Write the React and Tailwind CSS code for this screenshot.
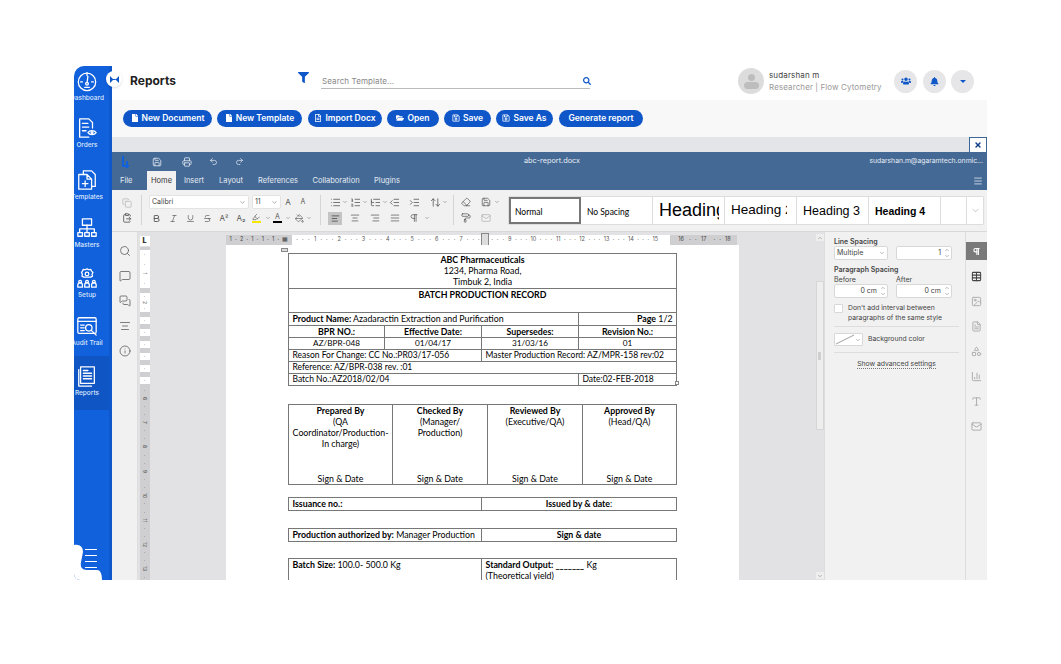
import React from "react";
import { ChevronDown, ChevronUp, Info, MessageSquare, MessagesSquare, AlignCenter, Undo2, Redo2, Printer, Save, X, Menu, Bold, Italic, Underline, Strikethrough, List, ListOrdered, ListTree, IndentIncrease, IndentDecrease, AlignLeft, AlignRight, AlignJustify, Pilcrow, Eraser, PaintRoller, Mail, Copy, ClipboardPaste, Table, Image, FileText, Shapes, BarChart3, Type, Highlighter, PaintBucket, ArrowUpDown, Search } from "lucide-react";
import { FaFilter, FaSearch, FaUsers, FaBell, FaFile, FaFolderOpen, FaRegFileAlt, FaRegSave } from "react-icons/fa";

function Side({ label, active, icon, h }) {
  return (
    <div className={`flex flex-col items-center w-[50px] -ml-[12px] shrink-0 ${h} ${active ? "bg-[#0f55c4] pt-[9px]" : ""}`}>
      {icon}
      <span className="text-[6.5px] leading-[9px] text-[#dbe7fb] whitespace-nowrap font-medium mt-[2px]">{label}</span>
    </div>
  );
}

const S = ({ children }) => (
  <svg className="shrink-0" width={22} height={22} viewBox="0 0 24 24" fill="none" stroke="#fff" strokeWidth="1.4" strokeLinejoin="round" strokeLinecap="round">{children}</svg>
);

const TopBtn = ({ w, children, icon, cls = "" }) => (
  <button className={`${w} ${cls} h-[17px] rounded-full bg-[#0f57c9] text-white text-[8.5px] font-semibold flex items-center justify-center gap-[3px] whitespace-nowrap`}>
    {icon}{children}
  </button>
);

const Tb = ({ I, c = "#4a4a4a", s = 11, w = "w-[14px]", sw = 1.6 }) => (
  <span className={`${w} shrink-0 flex items-center justify-center`}><I size={s} color={c} strokeWidth={sw} /></span>
);
const Ch = ({ w = "w-[6px]" }) => (
  <span className={`${w} shrink-0 flex items-center justify-center`}><ChevronDown size={6} color="#777" /></span>
);

const Style = ({ cls, children, active, clip = "w-[66px]" }) => (
  <div className={`w-[72px] h-full shrink-0 flex items-center bg-white border-r border-[#ddd] pl-[6px] ${active ? "outline-2 -outline-offset-2 outline-[#777]" : ""} text-black`}>
    <span className={`${clip} block overflow-hidden whitespace-nowrap ${cls}`}>{children}</span>
  </div>
);

const Td = ({ children, cls = "", ...r }) => (
  <td {...r} className={`border border-[#777] px-[3.5px] py-0 align-top overflow-hidden whitespace-nowrap text-black ${cls}`}>{children}</td>
);

const HRuler = () => {
  const nums = Array.from({ length: 15 }, (_, i) => i + 1);
  return (
    <div className="h-[10px] flex items-center text-[5.5px] text-[#555] leading-none">
      <div className="w-[66px] h-full bg-[#cfcfd1] flex items-center justify-around px-[2px] shrink-0 text-[#444]">
        <span>1</span><span>·</span><span>2</span><span>·</span><span>1</span><span>·</span><span>1</span><span>·</span><span>1</span><span>·</span><span>▦</span>
      </div>
      <div className="w-[378px] h-full bg-white flex items-center shrink-0 pl-[2px]">
        {nums.map((n) => (
          <span key={n} className="w-[24.4px] shrink-0 flex justify-around"><span>·</span><span>·</span><span>·</span><span>{n}</span></span>
        ))}
      </div>
      <div className="w-[67px] h-full bg-[#cfcfd1] flex items-center shrink-0 text-[#444]">
        <span className="w-[14px] shrink-0 flex justify-end">16</span>
        <span className="w-[24.4px] shrink-0 flex justify-around pl-[3px]"><span>·</span><span>·</span><span>17</span></span>
        <span className="w-[24.4px] shrink-0 flex justify-around pl-[3px]"><span>·</span><span>·</span><span>18</span></span>
      </div>
    </div>
  );
};

const VRuler = () => (
  <div className="w-[10px] flex flex-col items-center text-[5px] leading-none text-[#444]">
    <div className="w-full h-[3px] bg-[#cfcfd1]" />
    <div className="w-full h-[38px] bg-white flex flex-col items-center justify-around"><span>·</span><span>·</span><span className="rotate-90">1</span><span>·</span></div>
    <div className="w-full h-[5px] bg-[#cfcfd1]" />
    <div className="w-full h-[19px] bg-white flex flex-col items-center justify-around"><span>·</span><span className="rotate-90">2</span><span>·</span></div>
    <div className="w-full h-[5px] bg-[#cfcfd1]" />
    {[1, 2, 3, 4, 5, 6].map((n) => (
      <React.Fragment key={n}>
        <div className="w-full h-[7px] bg-white flex items-center justify-center"><span>·</span></div>
        {n < 6 && <div className="w-full h-[5px] bg-[#cfcfd1]" />}
      </React.Fragment>
    ))}
    <div className="w-full h-[196px] bg-[#cfcfd1] flex flex-col items-center pt-[2px]">
      {[6, 7, 8, 9, 10, 11, 12, 13].map((n) => (
        <span key={n} className="h-[24.4px] shrink-0 flex flex-col items-center justify-around">
          <span>·</span><span className="rotate-90">{n}</span><span>·</span>
        </span>
      ))}
    </div>
  </div>
);

const Spin = ({ v, w }) => (
  <div className={`${w} h-[14px] bg-white border border-[#d8d8d8] rounded-[2px] flex items-center justify-end text-[7px] text-[#444] pr-[1px] gap-[3px]`}>
    <span>{v}</span>
    <span className="flex flex-col"><ChevronUp size={6} color="#777" /><ChevronDown size={6} color="#777" /></span>
  </div>
);

export default function App() {
  return (
    <div className="w-[1061px] h-[664px] bg-white pt-[66px] pl-[74px] font-['Inter',sans-serif] overflow-hidden">
      <div className="relative w-[913px] h-[514px] flex rounded-tl-[10px] rounded-tr-[10px] rounded-bl-[6px] overflow-hidden">
        {/* sidebar */}
        <aside className="w-[38px] shrink-0 bg-[#1160dc] flex flex-col border-r-[3px] border-[#0f58cc] pt-[4px] overflow-hidden">
          <Side label="Dashboard" h="h-[47px]" icon={<S><circle cx="12" cy="13" r="9.5" /><path d="M12 3v3M12 14l1-7M9.5 19h5M5 13h2M17 13h2" /><circle cx="12" cy="15" r="1.5" /></S>} />
          <Side label="Orders" h="h-[52px]" icon={<S><path d="M4 2h10l4 4v6M4 2v20h10M7 7h6M7 11h7M7 15h4" /><path d="M13 17c2-3 7-3 9 0-2 3-7 3-9 0z" /><circle cx="17.5" cy="17" r="1" /></S>} />
          <Side label="Templates" h="h-[48px]" icon={<S><path d="M8 6V2h9l4 4v13h-4" /><path d="M3 6h9l5 5v11H3zM12 6v5h5M10 13v6M7 16h6" /></S>} />
          <Side label="Masters" h="h-[50px]" icon={<S><rect x="7" y="2" width="10" height="7" /><path d="M12 9v4M4 13h16M4 13v4M12 13v4M20 13v4" /><rect x="2" y="17" width="5" height="4" /><rect x="9.5" y="17" width="5" height="4" /><rect x="17" y="17" width="5" height="4" /></S>} />
          <Side label="Setup" h="h-[48px]" icon={<S><circle cx="12" cy="7.500" r="2" /><path d="M12 2l2 1 2-.5 1 2 1.5 1.5-1 2 .5 2-2 1H8.500l-2-1 .5-2-1-2L7 4.500l1-2 2 .5z" /><circle cx="4.500" cy="16" r="1.500" /><path d="M2 22v-2.500a2.500 2.500 0 015 0V22z" /><circle cx="12" cy="16" r="1.500" /><path d="M9.500 22v-2.500a2.500 2.500 0 015 0V22z" /><circle cx="19.500" cy="16" r="1.500" /><path d="M17 22v-2.500a2.500 2.500 0 015 0V22z" /></S>} />
          <Side label="Audit Trail" h="h-[41px]" icon={<S><rect x="2" y="3" width="20" height="17" rx="1.500" /><path d="M2 7h20M5 11h4M5 14h4M5 17h4" /><circle cx="14" cy="14" r="3.500" /><path d="M17 17l5 5" /></S>} />
          <Side active label="Reports" h="h-[54px]" icon={<S><path d="M5 2h15v18H5zM3 5v18h14" /><path d="M8 6h5M8 9h9M8 12h9M8 15h9" /></S>} />
        </aside>

        {/* main */}
        <main className="flex-1 flex flex-col min-w-0 text-[#222]">
          {/* header */}
          <header className="h-[34px] bg-white flex items-center shrink-0 pb-[4px]">
            <span className="ml-[18px] w-[168px] text-[12px] font-bold text-[#222]">Reports</span>
            <FaFilter size={11} color="#0f57c9" className="-mt-[8px] shrink-0" />
            <div className="ml-[12px] w-[269px] h-[16px] border-b border-[#bbb] flex items-center justify-between pl-[1px] shrink-0">
              <span className="text-[8px] text-[#888] tracking-[0.1px]">Search Template...</span>
              <FaSearch size={8} color="#0f57c9" className="mr-[-1px]" />
            </div>
            <div className="ml-[148px] w-[26px] h-[26px] rounded-full bg-[#dcdcdc] flex flex-col items-center justify-center shrink-0">
              <span className="w-[7px] h-[7px] rounded-full bg-[#bdbdbd]" />
              <span className="w-[15px] h-[7px] rounded-full bg-[#bdbdbd] mt-[1px]" />
            </div>
            <div className="ml-[5px] w-[125px] flex flex-col leading-[12px] shrink-0">
              <span className="text-[8px] text-[#444] tracking-[0.15px]">sudarshan m</span>
              <span className="text-[8px] text-[#999] whitespace-nowrap tracking-[0.1px]">Researcher | Flow Cytometry</span>
            </div>
            <div className="flex gap-[5.500px]">
              <span className="w-[23px] h-[23px] rounded-full bg-[#e6e6e8] flex items-center justify-center"><FaUsers size={10} color="#0f57c9" /></span>
              <span className="w-[23px] h-[23px] rounded-full bg-[#e6e6e8] flex items-center justify-center"><FaBell size={9} color="#0f57c9" /></span>
              <span className="w-[23px] h-[23px] rounded-full bg-[#e6e6e8] flex items-center justify-center"><span className="w-0 h-0 border-x-[3px] border-x-transparent border-t-[3px] border-t-[#0f57c9]" /></span>
            </div>
          </header>
          {/* action bar */}
          <div className="h-[37px] bg-[#f8f8f9] flex items-center pl-[11px] gap-[5px] shrink-0 pb-[1px]">
            <TopBtn w="w-[89px]" icon={<FaFile size={8} color="#fff" />}>New Document</TopBtn>
            <TopBtn w="w-[85px]" icon={<FaFile size={8} color="#fff" />}>New Template</TopBtn>
            <TopBtn w="w-[74px]" cls="ml-[1px]" icon={<FaRegFileAlt size={8} color="#fff" />}>Import Docx</TopBtn>
            <TopBtn w="w-[52px]" icon={<FaFolderOpen size={8} color="#fff" />}>Open</TopBtn>
            <TopBtn w="w-[47px]" icon={<FaRegSave size={8} color="#fff" />}>Save</TopBtn>
            <TopBtn w="w-[57px]" icon={<FaRegSave size={8} color="#fff" />}>Save As</TopBtn>
            <TopBtn w="w-[84px]" cls="ml-[1px]">Generate report</TopBtn>
          </div>
          {/* gray band */}
          <div className="h-[15px] bg-[#e4e5e8] flex justify-end shrink-0">
            <span className="w-[18px] h-[15px] bg-white border border-[#3d6595] border-b-0 flex items-center justify-center"><X size={8} color="#0f3f8a" strokeWidth={4} /></span>
          </div>

          {/* title bar */}
          <div className="h-[38px] bg-[#446995] flex flex-col shrink-0 text-white">
            <div className="h-[19px] flex items-center">
              <svg width="10" height="14" viewBox="0 0 10 14" className="ml-[9px]" fill="none" stroke="#1160dc" strokeWidth="2"><path d="M2 1v10h6M6 6v7" /></svg>
              <Save size={10} color="#dfe6ef" className="ml-[21px]" />
              <Printer size={10} color="#dfe6ef" className="ml-[20px]" />
              <Undo2 size={9} color="#dfe6ef" className="ml-[17px]" />
              <Redo2 size={9} color="#dfe6ef" className="ml-[17px]" />
              <span className="ml-[280px] text-[7.300px] text-[#e6ecf4] whitespace-nowrap">abc-report.docx</span>
              <span className="ml-auto mr-[4px] text-[6.800px] text-[#e6ecf4] whitespace-nowrap">sudarshan.m@agaramtech.onmic...</span>
            </div>
            <div className="h-[19px] flex items-end text-[7.500px] text-[#e6ecf4]">
              <span className="w-[35px] h-[18px] flex items-center pl-[8px]">File</span>
              <span className="w-[29px] h-[19px] bg-[#f1f1f1] text-[#333] flex items-center justify-center">Home</span>
              <span className="w-[34px] h-[18px] flex items-center justify-center ml-[1px]">Insert</span>
              <span className="w-[40px] h-[18px] flex items-center justify-center">Layout</span>
              <span className="w-[54px] h-[18px] flex items-center justify-center">References</span>
              <span className="w-[62px] h-[18px] flex items-center justify-center">Collaboration</span>
              <span className="w-[40px] h-[18px] flex items-center justify-center">Plugins</span>
              <Menu size={10} color="#dfe6ef" className="ml-auto mr-[4px] mb-[4px]" />
            </div>
          </div>

          {/* ribbon */}
          <div className="h-[42px] bg-[#f1f1f1] border-b border-[#d8d8d8] flex items-center shrink-0 pb-[1px]">
            <div className="w-[29px] shrink-0 flex flex-col items-center gap-[5px]">
              <Copy size={10} color="#bbb" />
              <ClipboardPaste size={10} color="#555" />
            </div>
            <div className="w-px h-[30px] bg-[#d5d5d5] shrink-0" />
            <div className="flex flex-col gap-[2px] ml-[7px] w-[171px] shrink-0">
              <div className="flex items-center">
                <div className="w-[100px] h-[14px] bg-white rounded-[2px] border border-[#e3e3e3] flex items-center justify-between px-[2px] text-[7px] text-[#444]">Calibri<ChevronDown size={7} color="#777" /></div>
                <div className="w-[29px] ml-[3px] h-[14px] bg-white rounded-[2px] border border-[#e3e3e3] flex items-center justify-between px-[2px] text-[7px] text-[#444]">11<ChevronDown size={7} color="#777" /></div>
                <span className="w-[14px] text-center text-[8px] text-[#555]">A</span>
                <span className="w-[16px] text-center text-[7px] text-[#555]">A</span>
              </div>
              <div className="flex items-center h-[14px] -ml-[1.500px]">
                <Tb I={Bold} s={9} w="w-[17px]" sw={2.2} /><Tb I={Italic} s={9} w="w-[17px]" /><Tb I={Underline} s={9} w="w-[17px]" /><Tb I={Strikethrough} s={9} w="w-[17px]" />
                <span className="w-[17px] text-center text-[8px] text-[#555]">A²</span><span className="w-[17px] text-center text-[8px] text-[#555]">A₂</span>
                <span className="w-[13px] flex flex-col items-center"><Highlighter size={8} color="#555" /><span className="w-[9px] h-[2px] bg-[#f5e800]" /></span>
                <Ch w="w-[10px]" />
                <span className="w-[10px] flex flex-col items-center text-[7px] leading-[8px] text-[#555]">A<span className="w-[9px] h-[2px] bg-black" /></span>
                <Ch w="w-[10px]" />
                <Tb I={PaintBucket} s={9} w="w-[13px]" />
                <Ch w="w-[7px]" />
              </div>
            </div>
            <div className="w-px h-[30px] bg-[#d5d5d5] shrink-0" />
            <div className="flex flex-col gap-[3px] w-[132px] pl-[7px] shrink-0">
              <div className="flex items-center h-[13px]">
                <Tb I={List} /><Ch /><Tb I={ListOrdered} /><Ch /><Tb I={ListTree} /><Ch />
                <span className="-ml-[1px]"><Tb I={IndentDecrease} /></span>
                <span className="ml-[6px]"><Tb I={IndentIncrease} /></span>
                <span className="ml-[7px]"><Tb I={ArrowUpDown} /></span><Ch />
              </div>
              <div className="flex items-center h-[13px]">
                <span className="w-[14px] h-[13px] bg-[#c4c4c4] flex items-center justify-center"><AlignLeft size={9} color="#444" /></span>
                <span className="ml-[3px]"><Tb I={AlignCenter} s={10} w="w-[20px]" /></span>
                <Tb I={AlignRight} s={10} w="w-[20px]" /><Tb I={AlignJustify} s={10} w="w-[20px]" /><Tb I={Pilcrow} s={10} w="w-[18px]" /><Ch w="w-[8px]" />
              </div>
            </div>
            <div className="w-px h-[30px] bg-[#d5d5d5] shrink-0" />
            <div className="flex flex-col gap-[3px] pl-[5px] w-[54px] shrink-0">
              <div className="flex items-center h-[13px]"><Tb I={Eraser} s={10} /><span className="ml-[6px]"><Tb I={Save} s={10} /></span><Ch w="w-[8px]" /></div>
              <div className="flex items-center h-[13px]"><Tb I={PaintRoller} s={10} /><span className="ml-[6px]"><Tb I={Mail} s={10} c="#aaa" /></span></div>
            </div>
            <div className="w-[476px] h-[29px] flex bg-white border border-[#ddd] rounded-[1px] shrink-0">
              <Style active cls="text-[8.500px] font-['Lato',sans-serif] mt-[4px]">Normal</Style>
              <Style cls="text-[8.500px] font-['Lato',sans-serif] mt-[4px]">No Spacing</Style>
              <Style cls="text-[18px] font-['Liberation_Sans',sans-serif]" clip="w-[60px]">Heading 1</Style>
              <Style cls="text-[13.500px] font-['Liberation_Sans',sans-serif] mt-[1px]" clip="w-[56px]">Heading 2</Style>
              <Style cls="text-[12.500px] font-['Liberation_Sans',sans-serif] mt-[2px]">Heading 3</Style>
              <Style cls="text-[10.500px] font-bold font-['Liberation_Sans',sans-serif] mt-[4px]">Heading 4</Style>
              <div className="w-[26px] border-r border-[#ddd]" />
              <div className="flex-1 flex items-center justify-center"><ChevronDown size={11} color="#888" strokeWidth={1} /></div>
            </div>
          </div>

          {/* workspace */}
          <div className="flex-1 flex min-h-0 overflow-hidden">
            <div className="w-[26px] bg-[#f1f1f1] border-r border-[#ddd] flex flex-col items-center pt-[13px] gap-[13px] shrink-0">
              <Search size={12} color="#555" strokeWidth={1.500} />
              <MessageSquare size={12} color="#555" strokeWidth={1.500} />
              <MessagesSquare size={12} color="#555" strokeWidth={1.500} />
              <AlignCenter size={12} color="#555" strokeWidth={1.500} />
              <Info size={12} color="#555" strokeWidth={1.500} />
            </div>
            <div className="w-[686px] bg-[#e2e2e4] flex shrink-0">
              <div className="w-[12px] flex flex-col items-center pt-[4px] shrink-0 pl-[1px]">
                <span className="w-[10px] h-[10px] bg-white flex items-center justify-center text-[7px] font-black text-[#333] mb-[1px]">L</span>
                <VRuler />
              </div>
              <div className="w-[76px] shrink-0" />
              <div className="w-[513px] shrink-0 flex flex-col relative">
                <div className="h-[3px]" />
                <HRuler />
                <span className="absolute left-[255px] top-[1px] w-[8px] h-[14px] border border-[#888] bg-[#ddd]" />
                <div className="flex-1 bg-white pl-[62px] pt-[8px] font-['Lato','Carlito',sans-serif] text-[8.800px] leading-[11px] relative overflow-hidden">
                  <table className="table-fixed border-collapse w-[388px]">
                    <colgroup><col className="w-[96px]" /><col className="w-[97px]" /><col className="w-[97px]" /><col className="w-[98px]" /></colgroup>
                    <tbody>
                      <tr className="h-[35px]"><Td colSpan={4} cls="text-center"><b>ABC Pharmaceuticals</b><br />1234, Pharma Road,<br />Timbuk 2, India</Td></tr>
                      <tr className="h-[24px]"><Td colSpan={4} cls="text-center font-bold">BATCH PRODUCTION RECORD</Td></tr>
                      <tr className="h-[13px]"><Td colSpan={3}><b>Product Name:</b> Azadaractin Extraction and Purification</Td><Td cls="text-right"><b>Page</b> 1/2</Td></tr>
                      <tr className="h-[12px] text-center font-bold"><Td>BPR NO.:</Td><Td>Effective Date:</Td><Td>Supersedes:</Td><Td>Revision No.:</Td></tr>
                      <tr className="h-[12px] text-center text-[8.200px]"><Td>AZ/BPR-048</Td><Td>01/04/17</Td><Td>31/03/16</Td><Td>01</Td></tr>
                      <tr className="h-[12px] text-[8.500px]"><Td colSpan={2}>Reason For Change: CC No.:PR03/17-056</Td><Td colSpan={2}>Master Production Record: AZ/MPR-158 rev:02</Td></tr>
                      <tr className="h-[12px] text-[8.500px]"><Td colSpan={4}>Reference: AZ/BPR-038 rev. :01</Td></tr>
                      <tr className="h-[12px] text-[8.500px]"><Td colSpan={3}>Batch No.:AZ2018/02/04</Td><Td>Date:02-FEB-2018</Td></tr>
                    </tbody>
                  </table>
                  <span className="absolute left-[449px] top-[136px] w-[4px] h-[4px] border border-[#888] bg-white" />
                  <span className="absolute left-[55px] top-[3px] w-[7px] h-[4px] border border-[#888] bg-[#ddd]" />
                  <table className="table-fixed border-collapse w-[388px] mt-[18px]">
                    <colgroup><col className="w-[104px]" /><col className="w-[95px]" /><col className="w-[95px]" /><col className="w-[94px]" /></colgroup>
                    <tbody>
                      <tr className="h-[80px] text-center">
                        <Td cls="relative"><b>Prepared By</b><br />(QA<br />Coordinator/Production-<br />In charge)<span className="absolute left-0 right-0 bottom-[0px]">Sign &amp; Date</span></Td>
                        <Td cls="relative"><b>Checked By</b><br />(Manager/<br />Production)<span className="absolute left-0 right-0 bottom-[0px]">Sign &amp; Date</span></Td>
                        <Td cls="relative"><b>Reviewed By</b><br />(Executive/QA)<span className="absolute left-0 right-0 bottom-[0px]">Sign &amp; Date</span></Td>
                        <Td cls="relative"><b>Approved By</b><br />(Head/QA)<span className="absolute left-0 right-0 bottom-[0px]">Sign &amp; Date</span></Td>
                      </tr>
                    </tbody>
                  </table>
                  <table className="table-fixed border-collapse w-[388px] mt-[12px]">
                    <colgroup><col className="w-[193px]" /><col className="w-[195px]" /></colgroup>
                    <tbody><tr className="h-[13px]"><Td><b>Issuance no.:</b></Td><Td cls="text-center"><b>Issued by &amp; date</b>:</Td></tr></tbody>
                  </table>
                  <table className="table-fixed border-collapse w-[388px] mt-[17px]">
                    <colgroup><col className="w-[193px]" /><col className="w-[195px]" /></colgroup>
                    <tbody><tr className="h-[13px]"><Td><b>Production authorized by:</b> Manager Production</Td><Td cls="text-center font-bold">Sign &amp; date</Td></tr></tbody>
                  </table>
                  <table className="table-fixed border-collapse w-[388px] mt-[16px]">
                    <colgroup><col className="w-[193px]" /><col className="w-[195px]" /></colgroup>
                    <tbody><tr className="h-[40px]"><Td><b>Batch Size:</b> 100.0- 500.0 Kg</Td><Td><b>Standard Output: _______</b> Kg<br />(Theoretical yield)</Td></tr></tbody>
                  </table>
                </div>
              </div>
              <div className="w-[76px] shrink-0" />
              <div className="w-[9px] shrink-0 flex flex-col items-center pt-[2px] pb-[1px]">
                <span className="w-[8px] h-[7px] bg-[#eeeeee] flex items-center justify-center"><ChevronUp size={6} color="#777" /></span>
                <div className="w-[8px] h-[149px] bg-[#eeeeee] border border-[#d6d6d6] mt-[40px] flex items-center justify-center"><span className="w-[3px] h-[8px] bg-[#cfcfcf]" /></div>
                <span className="w-[8px] h-[7px] bg-[#eeeeee] flex items-center justify-center mt-auto"><ChevronDown size={6} color="#777" /></span>
              </div>
            </div>
            <div className="flex-1 bg-[#f1f1f1] border-l border-[#ddd] pl-[9px] pr-[6px] pt-[5px] text-[7px] text-[#444]">
              <div className="font-semibold leading-[9px]">Line Spacing</div>
              <div className="flex gap-[8px]">
                <div className="w-[54px] h-[14px] bg-white border border-[#d8d8d8] rounded-[2px] flex items-center justify-between px-[2px]">Multiple<ChevronDown size={6} color="#777" /></div>
                <Spin v="1" w="w-[56px]" />
              </div>
              <div className="font-semibold leading-[9px] mt-[5px]">Paragraph Spacing</div>
              <div className="flex gap-[8px] leading-[9px] mt-[1px]"><span className="w-[54px]">Before</span><span>After</span></div>
              <div className="flex gap-[8px]">
                <Spin v="0 cm" w="w-[54px]" />
                <Spin v="0 cm" w="w-[56px]" />
              </div>
              <div className="flex mt-[5px] gap-[5px]">
                <span className="w-[9px] h-[9px] bg-white border border-[#d8d8d8] rounded-[1px] mt-[1px] shrink-0" />
                <span className="leading-[10px] text-[6.800px] whitespace-nowrap">Don't add interval between<br />paragraphs of the same style</span>
              </div>
              <div className="h-px bg-[#ddd] mt-[3px] w-[125px]" />
              <div className="flex items-center mt-[6px] gap-[5px]">
                <span className="w-[29px] h-[13px] border border-[#d8d8d8] bg-white rounded-[1px] flex items-center">
                  <svg width="20" height="11" viewBox="0 0 20 11" stroke="#777" strokeWidth="0.7"><path d="M1 10L19 1" /></svg>
                  <ChevronDown size={6} color="#777" />
                </span>
                <span className="text-[6.800px]">Background color</span>
              </div>
              <div className="h-px bg-[#ddd] mt-[6px] w-[125px]" />
              <div className="mt-[6px] text-center text-[6.800px] w-[125px]"><span className="border-b border-dotted border-[#777]">Show advanced settings</span></div>
            </div>
            <div className="w-[22px] bg-[#f1f1f1] border-l border-[#ddd] flex flex-col items-center shrink-0">
              <span className="w-full h-[18px] bg-[#7a7a7a] flex items-center justify-center mt-[10px] shrink-0"><Pilcrow size={9} color="#fff" strokeWidth={3} /></span>
              <span className="mt-[11px]"><Table size={11} color="#444" strokeWidth={2.200} /></span>
              <span className="mt-[14px]"><Image size={11} color="#aaa" /></span>
              <span className="mt-[14px]"><FileText size={11} color="#aaa" /></span>
              <span className="mt-[14px]"><Shapes size={11} color="#aaa" /></span>
              <span className="mt-[14px]"><BarChart3 size={11} color="#aaa" /></span>
              <span className="mt-[14px]"><Type size={11} color="#aaa" /></span>
              <span className="mt-[14px]"><Mail size={11} color="#aaa" /></span>
            </div>
          </div>
        </main>

        {/* overlays */}
        <span className="absolute left-[32px] top-[5px] w-[16px] h-[16px] rounded-full bg-white shadow-sm flex items-center justify-center">
          <svg width="9" height="7" viewBox="0 0 9 7" fill="#0f57c9"><path d="M0 0l3.500 3.500L0 7zM9 0L5.500 3.500 9 7zM3 3h3v1H3z" /></svg>
        </span>
        <div className="absolute left-0 bottom-0 w-[28px] h-[36px]">
          <svg width="28" height="36" viewBox="0 0 28 36" fill="#fff" className="absolute left-0 top-0">
            <path d="M0 1C6 0 9 3 9 8L7 18C6 23 8 26 13 26L23 26C26 26 28 29 28 36L0 36Z" />
          </svg>
          <div className="absolute left-[11px] top-[5px] w-[12px] flex flex-col gap-[5px]">
            <span className="h-[1px] bg-white" /><span className="h-[1px] bg-white" /><span className="h-[1px] bg-white" /><span className="h-[1px] bg-white" />
          </div>
        </div>
      </div>
    </div>
  );
}
